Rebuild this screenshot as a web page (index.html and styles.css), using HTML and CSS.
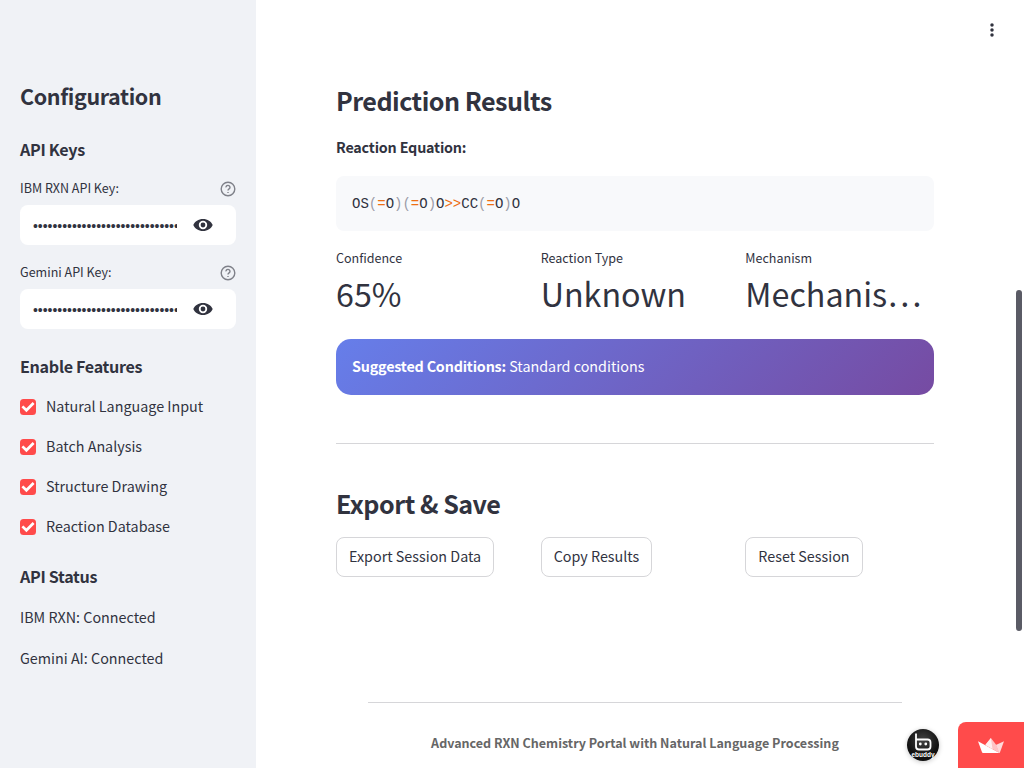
FILE: index.html
```
<!DOCTYPE html>
<html lang="en">
<head>
<meta charset="utf-8">
<title>RXN Chemistry Portal</title>
<link rel="stylesheet" href="styles.css">
</head>
<body>
<div class="app">
  <aside class="sidebar">
    <h2 class="side-title">Configuration</h2>
    <h3 class="side-heading keys">API Keys</h3>
    <div class="field">
      <div class="field-label"><span>IBM RXN API Key:</span>
        <svg class="help" viewBox="0 0 16 16"><circle cx="8" cy="8" r="6.8"/><path d="M6 6.400a2 1.900 0 1 1 3.100 1.500C8.300 8.400 8 8.800 8 9.600"/><path d="M8 10.900v1.200"/></svg>
      </div>
      <div class="field-box"><div class="dots">••••••••••••••••••••••••••••••</div>
        <svg class="eye" viewBox="0 0 20 20"><path fill-rule="evenodd" d="M10 4C5.500 4 1.800 6.500.3 10 1.800 13.500 5.500 16 10 16s8.200-2.500 9.700-6C18.200 6.500 14.500 4 10 4Zm0 10.200a4.200 4.200 0 1 1 0-8.400 4.200 4.200 0 0 1 0 8.400Zm0-6.600a2.400 2.400 0 1 0 0 4.800 2.400 2.400 0 0 0 0-4.800Z"/></svg>
      </div>
    </div>
    <div class="field">
      <div class="field-label"><span>Gemini API Key:</span>
        <svg class="help" viewBox="0 0 16 16"><circle cx="8" cy="8" r="6.8"/><path d="M6 6.400a2 1.900 0 1 1 3.100 1.500C8.300 8.400 8 8.800 8 9.600"/><path d="M8 10.900v1.200"/></svg>
      </div>
      <div class="field-box"><div class="dots">••••••••••••••••••••••••••••••</div>
        <svg class="eye" viewBox="0 0 20 20"><path fill-rule="evenodd" d="M10 4C5.500 4 1.800 6.500.3 10 1.800 13.500 5.500 16 10 16s8.200-2.500 9.700-6C18.200 6.500 14.500 4 10 4Zm0 10.200a4.200 4.200 0 1 1 0-8.400 4.200 4.200 0 0 1 0 8.400Zm0-6.600a2.400 2.400 0 1 0 0 4.800 2.400 2.400 0 0 0 0-4.800Z"/></svg>
      </div>
    </div>
    <h3 class="side-heading features">Enable Features</h3>
    <div class="checks">
      <div class="check"><svg class="tick" viewBox="0 0 16 16"><rect width="16" height="16" rx="3.500"/><path d="M2.400 7.400 6.400 11.300 13.600 4"/></svg><span>Natural Language Input</span></div>
      <div class="check"><svg class="tick" viewBox="0 0 16 16"><rect width="16" height="16" rx="3.500"/><path d="M2.400 7.400 6.400 11.300 13.600 4"/></svg><span>Batch Analysis</span></div>
      <div class="check"><svg class="tick" viewBox="0 0 16 16"><rect width="16" height="16" rx="3.500"/><path d="M2.400 7.400 6.400 11.300 13.600 4"/></svg><span>Structure Drawing</span></div>
      <div class="check"><svg class="tick" viewBox="0 0 16 16"><rect width="16" height="16" rx="3.500"/><path d="M2.400 7.400 6.400 11.300 13.600 4"/></svg><span>Reaction Database</span></div>
    </div>
    <h3 class="side-heading status">API Status</h3>
    <p class="status-line">IBM RXN: Connected</p>
    <p class="status-line">Gemini AI: Connected</p>
  </aside>

  <main class="main">
    <h2 class="title">Prediction Results</h2>
    <p class="equation-label">Reaction Equation:</p>
    <div class="code">OS<i class="p">(</i><i class="o">=</i>O<i class="p">)</i><i class="p">(</i><i class="o">=</i>O<i class="p">)</i>O<i class="o">&gt;&gt;</i>CC<i class="p">(</i><i class="o">=</i>O<i class="p">)</i>O</div>
    <div class="columns metrics">
      <div><div class="metric-label">Confidence</div><div class="metric-value">65%</div></div>
      <div><div class="metric-label">Reaction Type</div><div class="metric-value">Unknown</div></div>
      <div><div class="metric-label">Mechanism</div><div class="metric-value">Mechanis…</div></div>
    </div>
    <div class="banner"><strong>Suggested Conditions:</strong> Standard conditions</div>
    <hr class="rule">
    <h2 class="title export">Export &amp; Save</h2>
    <div class="columns actions">
      <div><button class="button">Export Session Data</button></div>
      <div><button class="button">Copy Results</button></div>
      <div><button class="button">Reset Session</button></div>
    </div>
    <footer class="footer">Advanced RXN Chemistry Portal with Natural Language Processing</footer>
  </main>

  <svg class="menu" viewBox="0 0 20 20"><circle cx="10" cy="5" r="1.750"/><circle cx="10" cy="10" r="1.750"/><circle cx="10" cy="15" r="1.750"/></svg>
  <div class="scrollbar"></div>
  <div class="avatar">
    <svg viewBox="0 0 32 32"><defs><radialGradient id="shade" cx=".5" cy=".35"><stop offset="0" stop-color="#444"/><stop offset="1" stop-color="#111"/></radialGradient></defs><circle cx="16" cy="16" r="16" fill="url(#shade)"/><path d="M9 4.500v13q0 3 3 3h8.500q3 0 3-3v-4q0-3-3-3H9" fill="none" stroke="#fff" stroke-width="1.800"/><circle cx="13.300" cy="15" r="1.400" fill="#fff"/><circle cx="18.800" cy="15" r="1.400" fill="#fff"/><text x="16" y="27.800" text-anchor="middle" textLength="23" lengthAdjust="spacingAndGlyphs">ebuddy</text></svg>
  </div>
  <div class="badge">
    <svg viewBox="0 0 26 16"><path d="M17.800 7 26 3.300 22 14.300Q21.700 15 21 15Z" fill="#ffd9da"/><path d="M12.900 0 18.300 7 21.500 15 7.300 7Z" fill="#ffc4c6"/><path d="M12.900 0 7.300 7 14.500 11Z" fill="#fff0f0"/><path d="M0 3.300 21.500 15H5Q4.300 15 4 14.300Z" fill="#fff"/></svg>
  </div>
</div>
</body>
</html>
```
FILE: styles.css
```
* { box-sizing: border-box; }
body { margin: 0; background: #fff; color: #31333f; font-family: "Noto Sans CJK SC", "Noto Sans", sans-serif; font-size: 14.34px; line-height: 24px; }
h2, h3, p { margin: 0; }
h2, h3 { font-weight: 600; }
.app { position: relative; display: flex; width: 1024px; height: 768px; overflow: hidden; }
.sidebar { width: 256px; height: 768px; background: #f0f2f6; padding: 81px 20px 0; }
.side-title { font-size: 21.5px; line-height: 30px; letter-spacing: -.38px; }
.side-heading { font-size: 16.13px; line-height: 22px; letter-spacing: -.31px; }
.keys { margin-top: 27px; }
.field { margin-top: 16px; }
.keys + .field { margin-top: 17px; }
.field-label { display: flex; justify-content: space-between; align-items: center; height: 22px; font-size: 12.54px; margin-bottom: 6px; }
.help { width: 16px; height: 16px; margin-top: 2px; fill: none; stroke: #7f8189; stroke-width: 1.4; }
.field-box { display: flex; align-items: center; height: 40px; border-radius: 8px; background: #fff; padding-left: 13px; }
.dots { width: 144px; padding-top: 2px; overflow: hidden; white-space: nowrap; font-family: "Liberation Sans", sans-serif; font-size: 14px; letter-spacing: -.04px; }
.eye { width: 20px; height: 20px; margin-left: 16px; fill: #31333f; }
.features { margin-top: 26px; }
.checks { display: flex; flex-direction: column; gap: 16px; margin-top: 18px; }
.check { display: flex; align-items: center; gap: 10px; height: 24px; }
.check span { padding-bottom: 2px; }
.tick { width: 16px; height: 16px; fill: #ff4b4b; }
.tick path { fill: none; stroke: #fff; stroke-width: 2.7; }
.status { margin-top: 26px; }
.status-line { margin-top: 17px; }
.status + .status-line { margin-top: 18px; }
.main { width: 598px; margin-left: 80px; padding-top: 83px; }
.title { font-size: 25.1px; line-height: 34px; letter-spacing: -.51px; }
.equation-label { margin-top: 18px; font-weight: 600; letter-spacing: -.19px; }
.code { height: 55px; margin-top: 17px; padding: 16px; border-radius: 8px; background: #f8f9fb; font: 14px/25px "Liberation Mono", monospace; }
.code i { font-style: normal; }
.p { color: #9b9ca8; }
.o { color: #ed6f13; }
.columns { display: grid; grid-template-columns: repeat(3, minmax(0, 1fr)); gap: 16px; }
.metrics { margin-top: 16px; }
.metric-label { font-size: 12.54px; line-height: 22px; }
.metric-value { height: 54px; font-size: 32.25px; line-height: 49px; white-space: nowrap; }
.banner { margin-top: 16px; height: 56px; border-radius: 15px; padding: 15px 16px 17px; color: #fff; background: linear-gradient(135deg, #667eea 0%, #764ba2 100%); }
.banner strong { font-weight: 600; letter-spacing: -.19px; }
.rule { height: 1px; border: 0; margin: 48px 0 0; background: #d6d6d9; }
.export { margin-top: 42px; }
.actions { margin-top: 17px; }
.button { display: block; height: 40px; padding: 0 12px 2px; border: 1px solid #d6d6d9; border-radius: 8px; background: #fff; color: inherit; font: inherit; white-space: nowrap; }
.footer { margin: 125px 32px 0; padding-top: 28px; border-top: 1px solid #d6d6d9; text-align: center; color: #666; font-size: 12.54px; font-weight: 600; }
.menu { position: absolute; left: 982px; top: 20px; width: 20px; height: 20px; fill: #31333f; }
.scrollbar { position: absolute; left: 1016px; top: 290px; width: 6px; height: 341px; border-radius: 3px; background: #5a5b65; }
.avatar { position: absolute; left: 907px; top: 729px; width: 32px; height: 32px; border-radius: 50%; box-shadow: 0 1px 5px rgba(0,0,0,.22); }
.avatar svg { display: block; }
.avatar text { fill: #fff; font: bold 6.5px "Liberation Sans", sans-serif; }
.badge { position: absolute; left: 958px; top: 722px; width: 66px; height: 46px; border-top-left-radius: 8px; background: #ff4b4b; padding: 16px 0 0 20px; }
.badge svg { display: block; width: 26px; height: 16px; }
```
